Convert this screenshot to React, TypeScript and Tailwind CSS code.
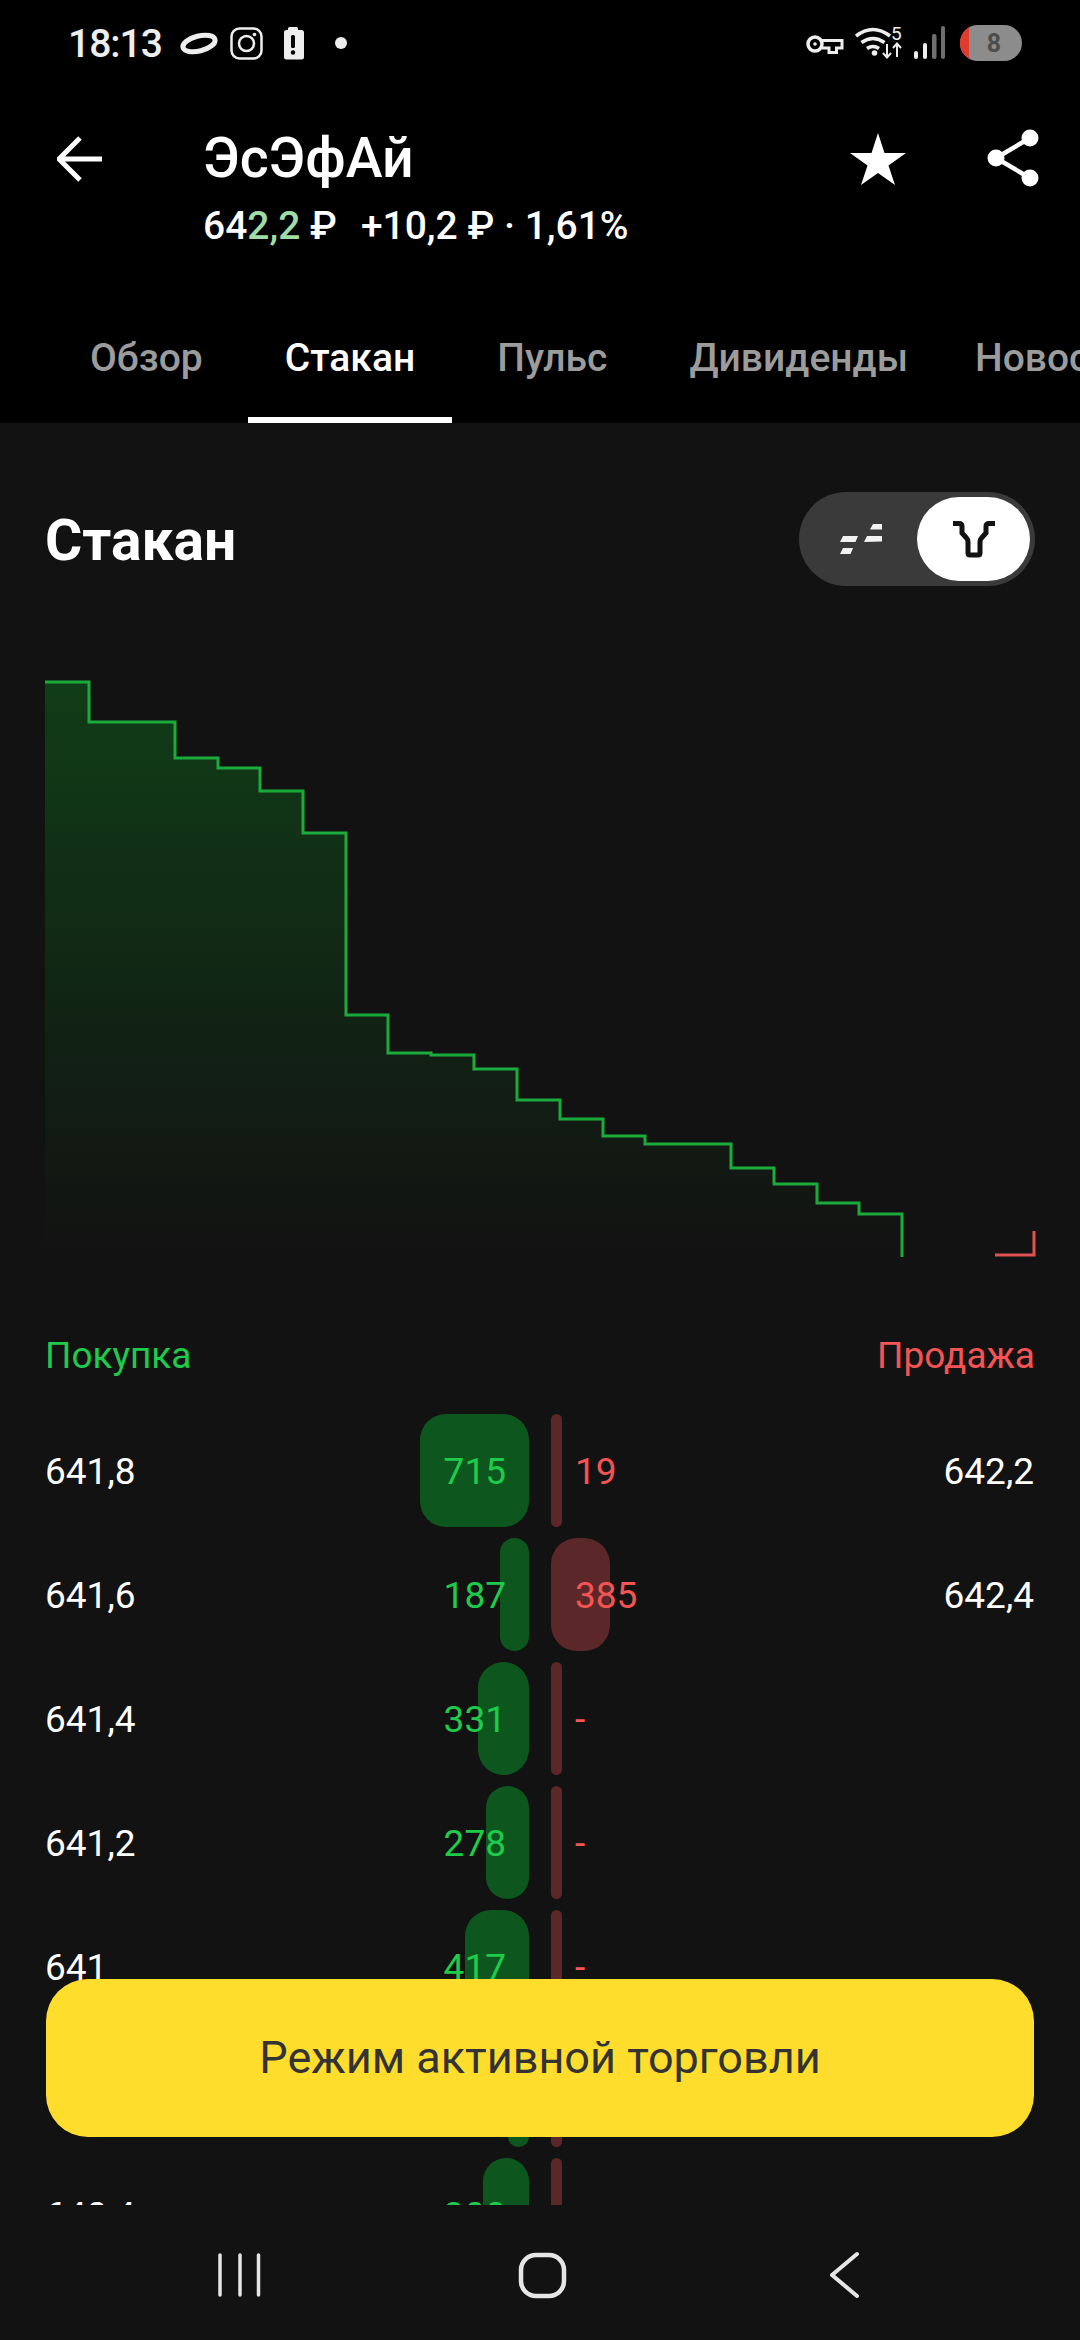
const tabs = [
  { label: "Обзор" },
  { label: "Стакан", active: true },
  { label: "Пульс" },
  { label: "Дивиденды" },
  { label: "Новости" },
];

const rows = [
  { price: "641,8", buy: 715, sell: "19", sellSize: 19, ask: "642,2" },
  { price: "641,6", buy: 187, sell: "385", sellSize: 385, ask: "642,4" },
  { price: "641,4", buy: 331, sell: "-", sellSize: 0 },
  { price: "641,2", buy: 278, sell: "-", sellSize: 0 },
  { price: "641", buy: 417, sell: "-", sellSize: 0 },
  { price: "640,8", buy: 137, sell: "-", sellSize: 0 },
  { price: "640,4", buy: 300, sell: "-", sellSize: 0 },
];

const depthLine =
  "M45 682H89V722H175V758H218V768H260V791H303V833H346V1015H388V1053H431V1055H474V1069H517V1100H560V1119H603V1136H645V1144H731V1168H774V1184H817V1203H859V1214H902V1257";

function DepthChart() {
  return (
    <svg viewBox="0 586 1080 684" className="block h-[684px] w-[1080px]" fill="none">
      <defs>
        <linearGradient id="depthFill" x1="0" y1="682" x2="0" y2="1250" gradientUnits="userSpaceOnUse">
          <stop offset="0" stopColor="#103d17" />
          <stop offset="1" stopColor="#121212" />
        </linearGradient>
      </defs>
      <path d={`${depthLine}H45Z`} fill="url(#depthFill)" />
      <path d={depthLine} stroke="#1aab3c" strokeWidth="3" />
      <path d="M995 1255H1034V1231" stroke="#df5252" strokeWidth="3" />
    </svg>
  );
}

function StatusLeftIcons() {
  return (
    <svg width="190" height="50" viewBox="170 20 190 50" fill="none">
      <ellipse cx="199" cy="44.5" rx="16.5" ry="7.5" transform="rotate(-14 199 44.5)" stroke="#eeeeee" strokeWidth="5" />
      <rect x="231.5" y="29.5" width="30" height="30" rx="8" stroke="#eeeeee" strokeWidth="2.5" />
      <circle cx="246.5" cy="44.5" r="7.5" stroke="#eeeeee" strokeWidth="2.5" />
      <circle cx="254.5" cy="35.5" r="1.8" fill="#eeeeee" />
      <path d="M288 31v-1.5q0-1.5 1.5-1.5h7q1.500 0 1.500 1.500V31h3.500q2.500 0 2.500 2.500V58q0 2.500-2.500 2.500h-15q-2.500 0-2.500-2.500V33.500q0-2.500 2.500-2.500z" fill="#eeeeee" />
      <rect x="291" y="36" width="4" height="13" rx="1.500" fill="#000" />
      <circle cx="293" cy="53.500" r="2.200" fill="#000" />
      <circle cx="341" cy="44" r="6" fill="#eeeeee" />
    </svg>
  );
}

function StatusRightIcons() {
  return (
    <div className="relative flex h-[50px] w-[230px] items-center">
      <svg width="230" height="50" viewBox="800 20 230 50" fill="none">
        <circle cx="815" cy="45" r="7" stroke="#eeeeee" strokeWidth="3.500" />
        <circle cx="815" cy="45" r="1.800" fill="#eeeeee" />
        <path d="M822 41.500H842V49H836.500V53.500H829V49H822" stroke="#eeeeee" strokeWidth="3" />
        <path d="M856 37q17-13 34 0M861.500 43.500q11.500-8 23 0M867 49.500q6-4 12 0" stroke="#eeeeee" strokeWidth="3.500" />
        <circle cx="874.500" cy="54" r="2.800" fill="#eeeeee" />
        <path d="M887 45v13M883 54l4 4.500 4-4.500M897 58V45M893 49l4-4.500 4 4.500" stroke="#eeeeee" strokeWidth="2" />
        <rect x="914" y="52" width="4" height="8" rx="2" fill="#eeeeee" />
        <rect x="923" y="44" width="4" height="16" rx="2" fill="#eeeeee" />
        <rect x="932" y="35" width="4.500" height="25" rx="2" fill="#6e6e6e" />
        <rect x="941" y="27" width="4" height="33" rx="2" fill="#6e6e6e" />
      </svg>
      <span className="absolute left-[91px] top-[5px] text-[19px] leading-[20px] text-[#eeeeee]">5</span>
      <div className="absolute left-[160px] top-[6px] flex h-[36px] w-[62px] items-center justify-center overflow-hidden rounded-full bg-[#8c8c8c]">
        <div className="absolute inset-y-0 left-0 w-[9px] bg-[#e23b2b]" />
        <span className="pl-[6px] text-[25px] font-bold leading-none text-[#4d4d4d]">8</span>
      </div>
    </div>
  );
}

function BookRow({ row }: { row: (typeof rows)[number] }) {
  return (
    <div className="flex h-[113px] shrink-0 items-center text-[37px]">
      <div className="relative flex h-full w-[484px] items-center justify-between pr-[23px]">
        <div
          className="absolute inset-y-0 right-0 rounded-[26px] bg-[#0d571f]"
          style={{ width: row.buy * 0.153 }}
        />
        <span className="relative pt-[3px] text-white">{row.price}</span>
        <span className="relative pt-[3px] text-[#1ecb4b]">{row.buy}</span>
      </div>
      <div className="relative ml-[22px] flex h-full w-[483px] items-center justify-between pl-[24px]">
        <div
          className="absolute inset-y-0 left-0 rounded-[26px] bg-[#5b2728]"
          style={{ width: 11 + Math.max(row.sellSize - 19, 0) * 0.131 }}
        />
        <span className="relative pt-[3px] text-[#f45454]">{row.sell}</span>
        {row.ask ? <span className="relative pt-[3px] text-white">{row.ask}</span> : null}
      </div>
    </div>
  );
}

export default function App() {
  return (
    <div className="relative flex h-[2340px] w-[1080px] flex-col overflow-hidden bg-[#121212] font-[Roboto,sans-serif] text-white">
      <header className="h-[423px] shrink-0 bg-black">
        <div className="flex h-[88px] items-center justify-between pl-[68px] pr-[50px]">
          <div className="flex items-center">
            <span className="w-[102px] text-[39px] font-medium leading-none tracking-[-1px] text-[#eeeeee]">18:13</span>
            <StatusLeftIcons />
          </div>
          <StatusRightIcons />
        </div>

        <div className="flex h-[180px] pl-[57px] pr-[41px]">
          <svg width="46" height="46" viewBox="0 0 46 46" fill="none" className="mt-[48px] shrink-0">
            <path d="M45 23H3M23 2 2 23l21 21" stroke="#fff" strokeWidth="5" />
          </svg>
          <div className="ml-[100px] flex-1 pt-[39px]">
            <h1 className="text-[55.5px] font-medium leading-[64px]">ЭсЭфАй</h1>
            <p className="mt-[13px] text-[39px] font-medium leading-[44px]">
              64<span className="text-[#9fdca6]">2,2</span> ₽<span className="ml-[24px]">+10,2 ₽ · 1,61%</span>
            </p>
          </div>
          <svg width="56" height="52" viewBox="0 0 56 52" className="mt-[45px] shrink-0">
            <path d="M28 0l6.500 20H56L38.500 32.500 45 52 28 40 11 52l6.500-19.500L0 20h21.500z" fill="#fff" />
          </svg>
          <svg width="52" height="58" viewBox="0 0 52 58" fill="none" className="ml-[81px] mt-[41px] shrink-0">
            <path d="M43 9 9 29l34 20" stroke="#fff" strokeWidth="4.500" />
            <circle cx="43" cy="9" r="8.500" fill="#fff" />
            <circle cx="9" cy="29" r="8.500" fill="#fff" />
            <circle cx="43" cy="49" r="8.500" fill="#fff" />
          </svg>
        </div>

        <nav className="flex h-[155px] gap-[8px] overflow-hidden pl-[53px]">
          {tabs.map((tab) => (
            <div
              key={tab.label}
              className={
                tab.active
                  ? "relative h-full shrink-0 px-[37px] pt-[68px] text-[39px] font-medium leading-[44px] text-white"
                  : "relative h-full shrink-0 px-[37px] pt-[68px] text-[39px] font-medium leading-[44px] text-[#9c9c9c] last:-ml-[15px]"
              }
            >
              {tab.label}
              {tab.active ? <div className="absolute inset-x-0 bottom-0 h-[6px] bg-white" /> : null}
            </div>
          ))}
        </nav>
      </header>

      <main className="flex min-h-0 flex-1 flex-col">
        <div className="mt-[69px] flex h-[94px] shrink-0 items-center justify-between px-[45px]">
          <h2 className="pt-[3px] text-[57px] font-bold leading-none">Стакан</h2>
          <div className="flex h-[94px] w-[236px] items-center rounded-full bg-[#3a3a3a] p-[5px]">
            <div className="flex flex-1 justify-center">
              <svg width="42" height="30" viewBox="0 0 42 30" fill="#f2f2f2">
                <path d="M3 12h15l-2.500 6H0zM3 24h10l-2.500 6H0zM27 12h15v5.500L24 18zM33 0h9v5.500H30z" />
              </svg>
            </div>
            <div className="flex h-[84px] w-[113px] items-center justify-center rounded-full bg-white">
              <svg width="42" height="37" viewBox="0 0 42 37" fill="none">
                <path
                  d="M0 2.500h6q3 0 3 3V12l4.500 5q1.500 1.500 1.500 4v11q0 2 2 2h8q2 0 2-2V21q0-2.500 1.500-4L33 12V5.500q0-3 3-3h6"
                  stroke="#121212"
                  strokeWidth="5"
                />
              </svg>
            </div>
          </div>
        </div>

        <DepthChart />

        <div className="mt-[61px] flex h-[50px] shrink-0 items-center justify-between px-[45px] text-[37px]">
          <span className="text-[#1ecb4b]">Покупка</span>
          <span className="text-[#f45454]">Продажа</span>
        </div>

        <div className="mt-[33px] flex h-[791px] shrink-0 flex-col gap-[11px] overflow-hidden pl-[45px]">
          {rows.map((row) => (
            <BookRow key={row.price} row={row} />
          ))}
        </div>

        <div className="flex flex-1 items-start justify-center">
          <svg width="1080" height="135" viewBox="0 2205 1080 135" fill="none" className="block">
            <path d="M220 2255v40M240 2255v40M258.500 2255v40" stroke="#e6e6e6" strokeWidth="3.500" strokeLinecap="round" />
            <rect x="521" y="2255" width="43" height="41" rx="15" stroke="#e6e6e6" strokeWidth="4.500" />
            <path d="M857 2254 832 2275l25 21" stroke="#e6e6e6" strokeWidth="4" strokeLinecap="round" strokeLinejoin="round" />
          </svg>
        </div>
      </main>

      <button
        type="button"
        className="absolute left-[46px] top-[1979px] flex h-[158px] w-[988px] items-center justify-center rounded-[42px] bg-[#ffdd2d] text-[45px] text-[#333333]"
      >
        Режим активной торговли
      </button>
    </div>
  );
}
